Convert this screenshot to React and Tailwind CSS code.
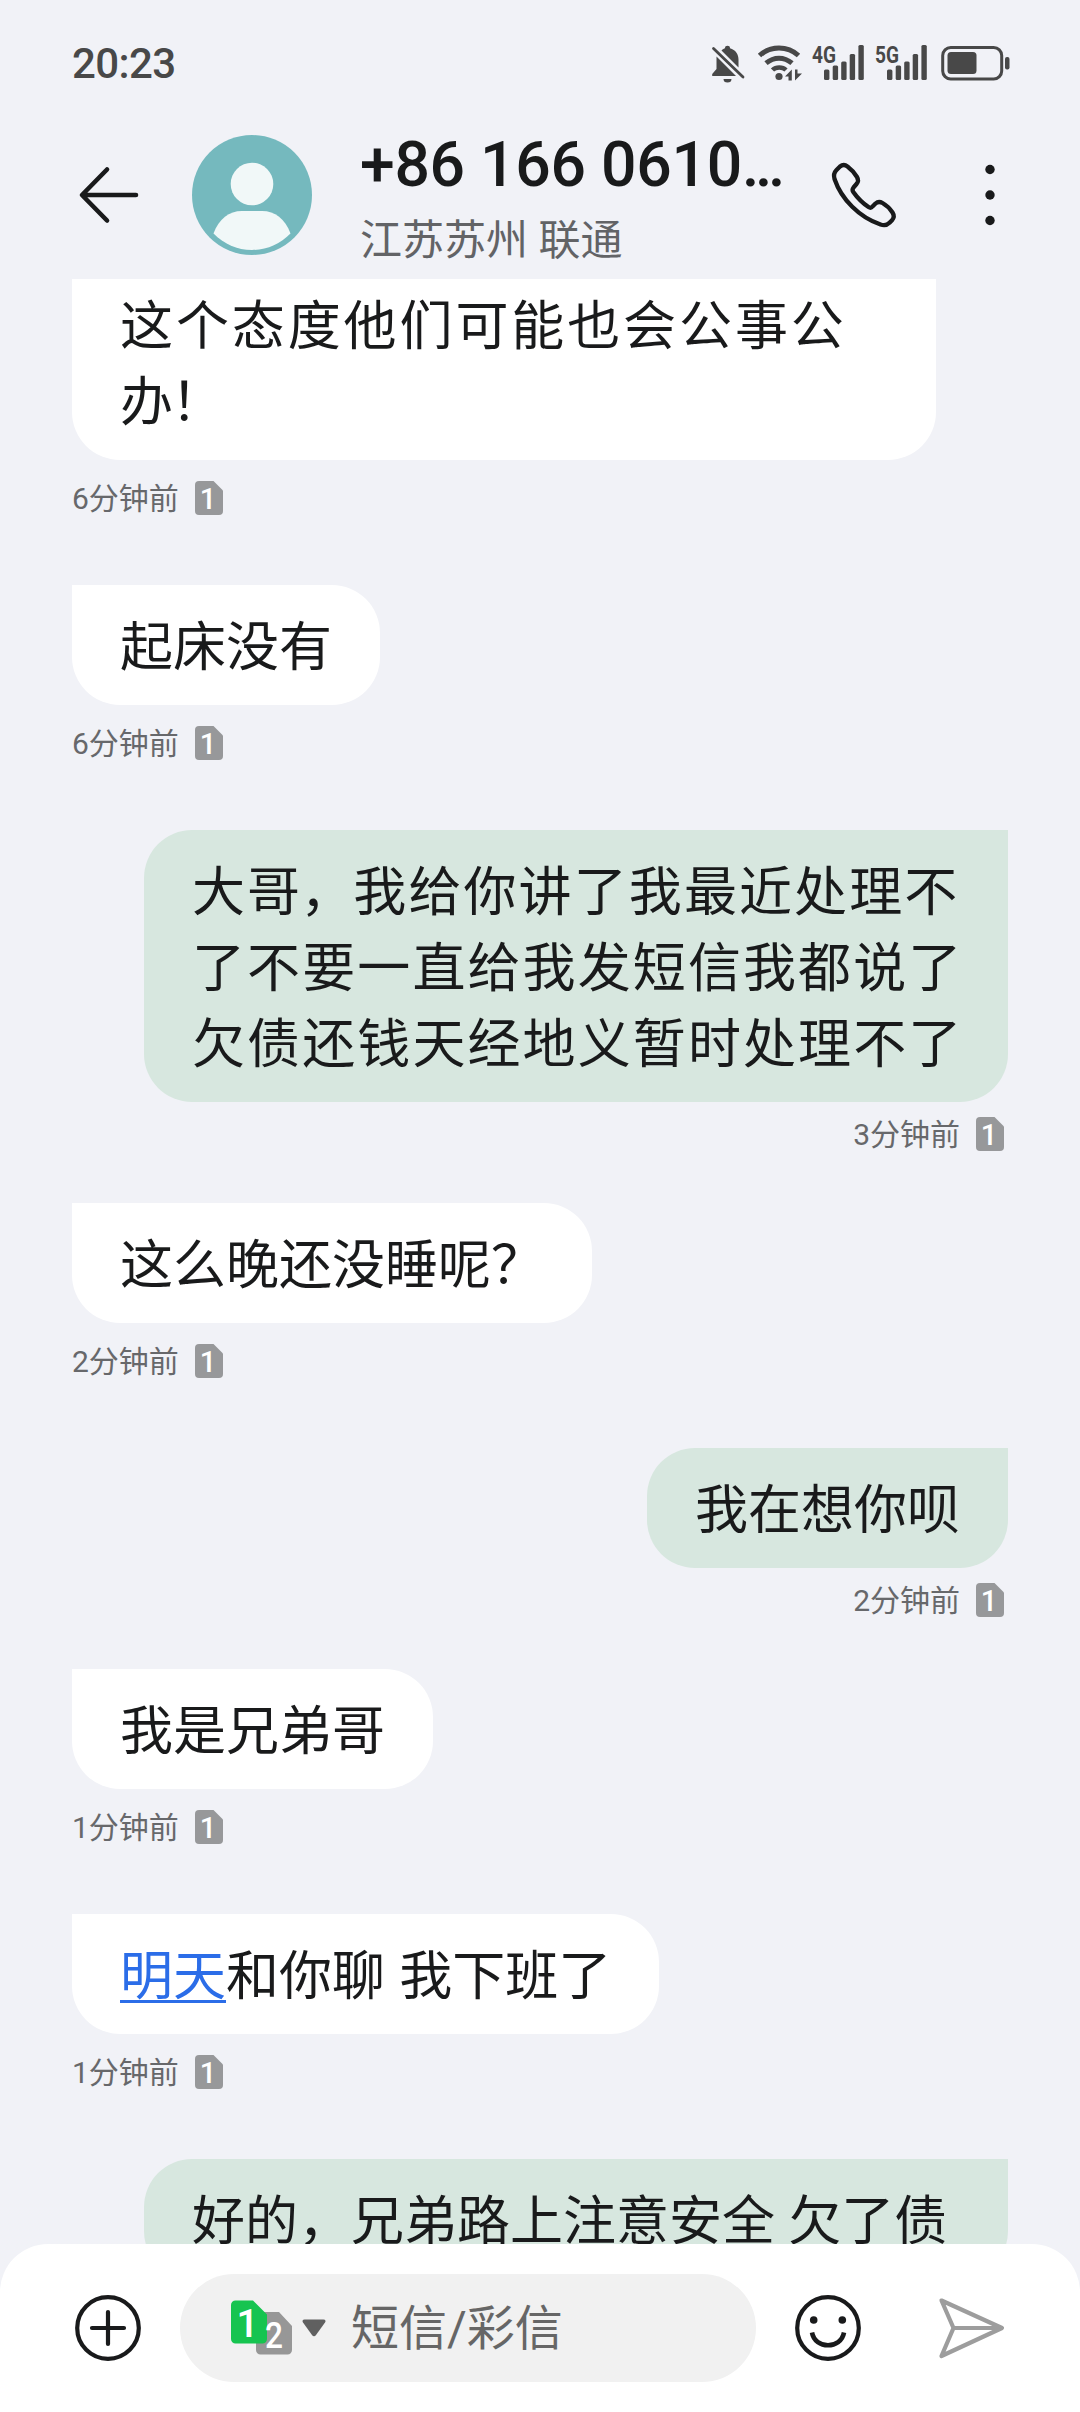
import React from 'react';

const messages = [
  { side: 'in', lines: ['这个态度他们可能也会公事公', '办！'], wide: true, cut: true, time: '6分钟前' },
  { side: 'in', lines: ['起床没有'], time: '6分钟前' },
  {
    side: 'out',
    lines: ['大哥，我给你讲了我最近处理不', '了不要一直给我发短信我都说了', '欠债还钱天经地义暂时处理不了'],
    wide: true,
    time: '3分钟前',
  },
  { side: 'in', lines: ['这么晚还没睡呢？'], time: '2分钟前' },
  { side: 'out', lines: ['我在想你呗'], time: '2分钟前' },
  { side: 'in', lines: ['我是兄弟哥'], time: '1分钟前' },
  { side: 'in', link: '明天', lines: ['和你聊 我下班了'], time: '1分钟前' },
  { side: 'out', lines: ['好的，兄弟路上注意安全 欠了债'], full: true, time: '1分钟前' },
];

const SimBadge = () => (
  <svg className="h-[34px] w-7 shrink-0" viewBox="0 0 28 34">
    <path d="M4 0H18.5L28 9.5V30a4 4 0 0 1-4 4H4a4 4 0 0 1-4-4V4a4 4 0 0 1 4-4z" fill="#97989a" />
    <text x="13" y="27.5" textAnchor="middle" fontFamily="Roboto, sans-serif" fontSize="29" fontWeight="500" fill="#fff">1</text>
  </svg>
);

const Signal = ({ label }) => (
  <svg className="h-9 w-[53px] overflow-visible" viewBox="0 0 53 36" fill="#484848">
    <text x="0" y="17.5" fontFamily="Roboto, sans-serif" fontSize="23" fontWeight="700" textLength="24" lengthAdjust="spacingAndGlyphs">
      {label}
    </text>
    <rect x="12" y="24.5" width="5.4" height="10.5" rx="1.5" />
    <rect x="20.7" y="20.5" width="5.4" height="14.5" rx="1.5" />
    <rect x="29.2" y="16.5" width="5.4" height="18.5" rx="1.5" />
    <rect x="37.7" y="9" width="5.4" height="26" rx="1.5" />
    <rect x="46.4" y="0" width="5.4" height="35" rx="1.5" />
  </svg>
);

const StatusBar = () => (
  <div className="flex h-[125px] items-start justify-between pt-[45px] pr-[70px] pl-[72px] text-[#484848]">
    <span className="mt-[-4px] text-[42px] leading-[46px] font-medium tracking-[-0.6px]">20:23</span>
    <div className="flex">
      {/* muted bell */}
      <svg className="mr-3 h-[38px] w-[34px]" viewBox="0 0 34 38" fill="#484848">
        <path d="M10.5 5.5C12 4 13 3.6 14 3.2 14 1.6 15 .8 16.5 .8S19 1.6 19 3.2C24.5 4.7 27.5 9 27.5 14.5V22.5z" />
        <path d="M5.5 11.5L25 31H1.2V29L5.500 24z" />
        <path d="M12.5 34h8a4 3.5 0 0 1-8 0z" />
        <path d="M2.5 3.5L32 32" stroke="#484848" strokeWidth="2.8" strokeLinecap="round" />
      </svg>
      {/* wifi with traffic arrows */}
      <svg className="mr-[10px] h-9 w-[45px]" viewBox="0 0 45 36" fill="none" stroke="#484848" strokeWidth="5">
        <path d="M2.5 10.5C13.5 .5 30.5 .5 41.5 10.5" />
        <path d="M9 18.2C17 11.5 27 11.5 35 18.2" />
        <path d="M15.5 25C19 21.5 25.5 21.5 29 25" strokeWidth="4.5" />
        <circle cx="22" cy="31.5" r="3.6" fill="#484848" stroke="none" />
        <path d="M28 31.5L34.8 24.5V35.500H31.5V31.5zM38 24.5H40.5V28.5H45L38 35.5z" fill="#484848" stroke="none" />
      </svg>
      <div className="mr-[10px]"><Signal label="4G" /></div>
      <div className="mr-[13px]"><Signal label="5G" /></div>
      <svg className="h-9 w-[69px]" viewBox="0 0 69 36" fill="#484848">
        <rect x="1.7" y="2.5" width="59" height="31.5" rx="8" fill="none" stroke="#484848" strokeWidth="3" />
        <rect x="6.5" y="7" width="29" height="22" rx="3.5" />
        <rect x="64" y="12" width="4.5" height="12.5" rx="2" />
      </svg>
    </div>
  </div>
);

const Header = () => (
  <div className="flex h-[154px] items-start pl-[78px]">
    <svg className="mt-[40px] h-[60px] w-[62px]" viewBox="0 0 62 60" fill="none" stroke="#191a1b" strokeWidth="4.6" strokeLinecap="round" strokeLinejoin="round">
      <path d="M58 30H5M29 4.5L4 30L29 55.5" />
    </svg>
    <svg className="mt-[10px] ml-[52px] h-[120px] w-[120px]" viewBox="0 0 120 120">
      <circle cx="60" cy="60" r="60" fill="#75b9be" />
      <circle cx="60" cy="49" r="21.3" fill="#f1f8f8" />
      <path d="M21.5 98.5C27 84 37 76 50 76H70C83 76 93 84 98.5 98.5C88 109 75 115 60 115S32 109 21.5 98.5z" fill="#f1f8f8" />
    </svg>
    <div className="ml-12 w-[438px]">
      <div className="mt-[3px] text-[62.5px] leading-[74px] font-medium tracking-[-0.3px] whitespace-nowrap text-[#191a1b]">
        +86 166 0610<span className="tracking-[-4.3px]">...</span>
      </div>
      <div className="mt-[9px] text-[42px] leading-[60px] text-[#626366]">江苏苏州 联通</div>
    </div>
    <svg className="mt-[35px] ml-8 h-[70px] w-[70px]" viewBox="0 0 70 70" fill="none" stroke="#191a1b" strokeWidth="4.3" strokeLinejoin="round">
      <path d="M10 6.5C12.5 4.5 15 4.5 17.5 6.5C21.5 9.5 24.5 13 27 17C28.5 19.5 28.3 22 26.5 24L23.5 27.5C22.3 29 22.3 30.5 23.3 32C27.5 38 32.5 43 38.5 47C40 48 41.5 47.8 42.5 46.5L45.5 43.5C47.5 41.7 50 41.5 52.5 43C56.5 45.3 60 48.5 62.5 52.5C64.3 55.3 64 58 62 60.2L59.5 62.8C57 65.3 54 65.7 50.5 64.5C29.5 57.5 11.5 39.5 4.5 19C3.5 15.5 4 12.5 6.5 10z" />
    </svg>
    <svg className="mt-[35px] ml-[78px] h-[70px] w-5" viewBox="0 0 20 70" fill="#191a1b">
      <circle cx="12" cy="9.5" r="4.7" />
      <circle cx="12" cy="35" r="4.7" />
      <circle cx="12" cy="60.5" r="4.7" />
    </svg>
  </div>
);

// pull full-width punctuation closer in justified lines
const tighten = (line) =>
  line.split(/([，！])/).map((part, i) => {
    if (part === '，') return <span key={i} className="-ml-[2px] -mr-[2px]">{part}</span>;
    if (part === '！') return <span key={i} className="-ml-[5px]">{part}</span>;
    return part;
  });

const Message = ({ msg }) => {
  const out = msg.side === 'out';
  const corners = out ? 'bg-[#d7e7df] rounded-tl-[48px]' : 'bg-white rounded-tr-[48px]';
  return (
    <div className={`flex shrink-0 flex-col ${out ? 'items-end pb-[52px]' : 'items-start pb-[70px]'}`}>
      <div
        className={`rounded-b-[48px] px-12 pb-[19px] text-[53px] leading-[76px] whitespace-nowrap text-[#191a1b] ${
          msg.cut ? 'bg-white pt-[10px]' : `pt-[25px] ${corners}`
        } ${msg.wide || msg.full ? 'w-[864px]' : ''} ${msg.wide ? (out ? 'tracking-[2.1px]' : 'tracking-[2.9px]') : ''}`}
      >
        {msg.lines.map((line) => (
          <div key={line} className={msg.link ? '[word-spacing:1px]' : ''}>
            {msg.link && (
              <span className="text-[#2b6de8] underline decoration-[3px] underline-offset-[5px]">{msg.link}</span>
            )}
            {msg.wide ? tighten(line) : line}
          </div>
        ))}
      </div>
      <div className={`flex h-[34px] items-center ${out ? 'mt-[15px] gap-4 pr-1' : 'mt-[21px] gap-4'}`}>
        <span className="mt-[2px] text-[30px] leading-[34px] text-[#67686b]">{msg.time}</span>
        <SimBadge />
      </div>
    </div>
  );
};

const InputBar = () => (
  <div className="flex h-[168px] shrink-0 items-start rounded-t-[48px] bg-white pt-[30px] pl-[73px]">
    <svg className="mt-[19px] h-[70px] w-[70px]" viewBox="0 0 70 70" fill="none" stroke="#191a1b" strokeWidth="4.2" strokeLinecap="round">
      <circle cx="35" cy="35" r="30.8" />
      <path d="M19 35H51M35 19V51" />
    </svg>
    <div className="ml-[37px] flex h-[108px] w-[576px] items-center rounded-full bg-[#f1f1f1] pl-[51px]">
      <svg className="h-[56px] w-[62px]" viewBox="0 0 62 56" fontFamily="Roboto, sans-serif" fontWeight="500" textAnchor="middle">
        <path d="M29 12H48L61 26V50a4.5 4.5 0 0 1-4.5 4.5H29.5a4.5 4.5 0 0 1-4.5-4.5V16z" fill="#979797" />
        <path d="M4.5 .5H22L36 14.5V39a4.5 4.5 0 0 1-4.5 4.5H4.5A4.5 4.5 0 0 1 0 39V5A4.5 4.5 0 0 1 4.5 .5z" fill="#16c450" />
        <text x="16.5" y="37" fontSize="39" fill="#fff">1</text>
        <text x="43" y="48" fontSize="36" textLength="18" lengthAdjust="spacingAndGlyphs" fill="#fff">2</text>
      </svg>
      <svg className="ml-[9px] h-[18px] w-6" viewBox="0 0 24 18" fill="#606060">
        <path d="M2.5 .5H21.5C23.5 .5 24 2 23 3.5L14 16C12.8 17.6 11.2 17.6 10 16L1 3.5C0 2 .5 .5 2.5 .5z" />
      </svg>
      <span className="mt-[2px] ml-[25px] text-[48px] leading-[70px] text-[#666]">短信/彩信</span>
    </div>
    <svg className="mt-[19px] ml-[37px] h-[70px] w-[70px]" viewBox="0 0 70 70" fill="none" stroke="#191a1b" strokeWidth="4.2">
      <circle cx="35" cy="35" r="30.8" />
      <path d="M19 39.5C22 56.5 48 56.5 51 39.5" strokeWidth="4.6" />
      <circle cx="20.7" cy="27" r="3.8" fill="#191a1b" stroke="none" />
      <circle cx="49.3" cy="27" r="3.8" fill="#191a1b" stroke="none" />
    </svg>
    <svg className="mt-[19px] ml-[74px] h-[70px] w-[72px]" viewBox="0 0 72 70" fill="none" stroke="#9d9d9d" strokeWidth="4.2" strokeLinejoin="round">
      <path d="M4.5 7.5L65 35L4.5 63L16.5 35zM16.5 35H64" />
    </svg>
  </div>
);

export default function App() {
  return (
    <div className="flex h-[2412px] w-[1080px] flex-col overflow-hidden bg-[#f1f2f7] font-[Roboto,'Noto_Sans_CJK_SC',sans-serif]">
      <StatusBar />
      <Header />
      <div className="flex h-[1965px] shrink-0 flex-col overflow-hidden px-[72px]">
        {messages.map((msg, i) => (
          <Message key={i} msg={msg} />
        ))}
      </div>
      <InputBar />
    </div>
  );
}
